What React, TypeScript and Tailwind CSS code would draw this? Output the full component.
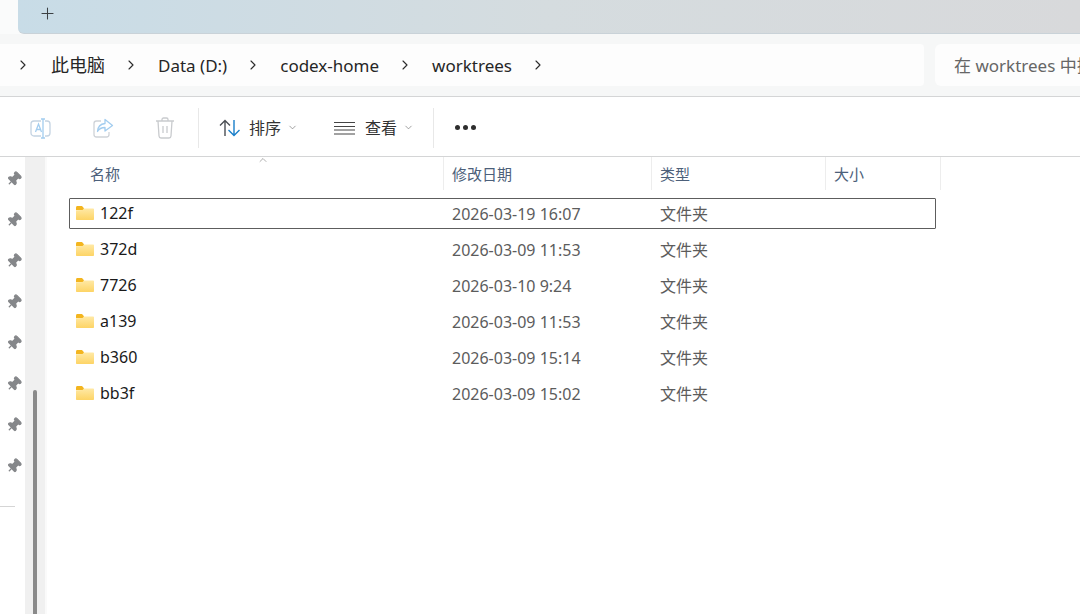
import { ChevronRight, ChevronDown, ChevronUp, Plus, Pin } from "lucide-react";

const font = { fontFamily: '"Noto Sans", "Noto Sans CJK SC", sans-serif' };

const crumbs = ["此电脑", "Data (D:)", "codex-home", "worktrees"];

const rows = [
  { name: "122f", date: "2026-03-19 16:07", selected: true },
  { name: "372d", date: "2026-03-09 11:53" },
  { name: "7726", date: "2026-03-10 9:24" },
  { name: "a139", date: "2026-03-09 11:53" },
  { name: "b360", date: "2026-03-09 15:14" },
  { name: "bb3f", date: "2026-03-09 15:02" },
];

function FolderIcon() {
  return (
    <svg width="20" height="16" viewBox="0 0 20 16" className="shrink-0 mb-[2px]">
      <defs>
        <linearGradient id="fold" x1="0" y1="0" x2="0" y2="1">
          <stop offset="0" stopColor="#ffe9a6" />
          <stop offset="1" stopColor="#fdd465" />
        </linearGradient>
      </defs>
      <path d="M1 2.500C1 1.700 1.600 1 2.400 1H7l2 2.200V5H1z" fill="#f3b51f" />
      <path d="M1 5.200 7.500 5 9 3.400h9.200c.5 0 .8.400.8.900V14c0 .6-.4 1-1 1H2c-.6 0-1-.4-1-1z" fill="url(#fold)" />
    </svg>
  );
}

function RenameIcon() {
  return (
    <svg width="24" height="24" viewBox="0 0 24 24" fill="none">
      <rect x="2" y="5" width="19" height="15" rx="3" stroke="#c4d3e2" strokeWidth="1.3" />
      <rect x="12" y="3" width="4" height="19" fill="#fff" />
      <path d="M14 3v19M12 3h4M12 22h4" stroke="#a3cdef" strokeWidth="1.3" />
      <path d="M6.500 16 9.500 8l3 8M7.500 13.500h4" stroke="#a3cdef" strokeWidth="1.3" />
    </svg>
  );
}

function ShareIcon() {
  return (
    <svg width="22" height="22" viewBox="0 0 22 22" fill="none">
      <path d="M9 4H4.500A2.500 2.500 0 0 0 2 6.500v11A2.500 2.500 0 0 0 4.500 20h10a2.500 2.500 0 0 0 2.500-2.500V15" stroke="#cfd3d8" strokeWidth="1.3" />
      <path d="M13 2.500 20.500 8.500 13 14v-3.500c-3.500 0-6 1.300-7.500 4 .3-4.500 3-7.500 7.500-8z" stroke="#a3cdef" strokeWidth="1.3" strokeLinejoin="round" />
    </svg>
  );
}

function TrashIcon() {
  return (
    <svg width="20" height="22" viewBox="0 0 20 22" fill="none" stroke="#c9cbce" strokeWidth="1.3">
      <path d="M1 4h18M7 4V2.500C7 1.700 7.700 1 8.500 1h3c.8 0 1.500.7 1.500 1.500V4" />
      <path d="M3 4l1 15c.1 1.200 1 2 2 2h8c1 0 1.900-.8 2-2l1-15" />
      <path d="M8 9v7M12 9v7" />
    </svg>
  );
}

function SortIcon() {
  return (
    <svg width="22" height="18" viewBox="0 0 22 18" fill="none" strokeWidth="1.4">
      <path d="M6 17V1.500M1 6.500l5-5 5 5" stroke="#4b4f54" />
      <path d="M15 1v15.500M9.500 11l5.500 5.500 5.500-5.500" stroke="#1a7fc9" />
    </svg>
  );
}

function PinIcon() {
  return <Pin size={16} strokeWidth={2} className="rotate-45 text-[#85878a] fill-[#85878a]" />;
}

export default function App() {
  return (
    <div style={font} className="w-[1080px] h-[614px] overflow-hidden bg-white flex flex-col text-[#1c1c1c]">
      {/* tabs */}
      <div className="h-[34px] pl-[18px] bg-[#fafbfb] shrink-0">
        <div className="h-full rounded-bl-md border-b border-[#c9d2d8] bg-gradient-to-r from-[#c8dce7] via-[#d5dcdf] to-[#d8d9db] flex items-center pl-[20px] pb-[6px]">
          <Plus size={19} strokeWidth={1.3} className="text-[#3c4043]" />
        </div>
      </div>

      {/* address bar */}
      <div className="h-[63px] shrink-0 bg-[#f6f7f7] border-b border-[#d4d5d6] pt-[10px] flex gap-[11px]">
        <div className="w-[924px] h-[42px] bg-[#fdfdfd] rounded-r flex items-center pl-[15px] text-[17px] leading-none">
          <ChevronRight size={16} strokeWidth={1.7} className="mr-[20px] text-[#2b2b2b]" />
          {crumbs.map((c, i) => (
            <div key={c} className="flex items-center">
              <span className={i === 0 ? "text-[18px] text-[#262626]" : "text-[#262626]"}>{c}</span>
              <ChevronRight size={16} strokeWidth={1.7} className="ml-[18px] mr-[19px] text-[#2b2b2b]" />
            </div>
          ))}
        </div>
        <div className="flex-1 h-[42px] bg-[#fdfdfd] rounded-l-md flex items-center pl-[19px] pt-[1px] text-[17px] text-[#666] whitespace-nowrap overflow-hidden">
          在 worktrees 中搜索
        </div>
      </div>

      {/* command bar */}
      <div className="h-[60px] shrink-0 bg-white border-b border-[#d4d5d6] flex items-center pt-[2px] text-[#333]">
        <div className="w-[198px] flex items-center pl-[29px]">
          <RenameIcon />
          <div className="ml-[39px]">
            <ShareIcon />
          </div>
          <div className="ml-[41px]">
            <TrashIcon />
          </div>
        </div>
        <div className="w-px h-[40px] bg-[#e8e8e8]" />
        <div className="flex items-center pl-[20px]">
          <SortIcon />
          <span className="ml-[8px] text-[16px]">排序</span>
          <ChevronDown size={11} strokeWidth={1.5} className="ml-[6px] text-[#777]" />
        </div>
        <div className="flex items-center pl-[36px]">
          <svg width="21" height="14" viewBox="0 0 21 14" stroke="#444" strokeWidth="1">
            <path d="M0 1.500h21M0 5.500h21M0 9h21M0 13h21" />
          </svg>
          <span className="ml-[10px] text-[16px]">查看</span>
          <ChevronDown size={11} strokeWidth={1.5} className="ml-[6px] text-[#777]" />
        </div>
        <div className="w-px h-[40px] bg-[#e8e8e8] ml-[19px]" />
        <div className="flex gap-[3px] ml-[21px]">
          <span className="w-[5px] h-[5px] rounded-full bg-[#2e2e2e]" />
          <span className="w-[5px] h-[5px] rounded-full bg-[#2e2e2e]" />
          <span className="w-[5px] h-[5px] rounded-full bg-[#2e2e2e]" />
        </div>
      </div>

      {/* body */}
      <div className="flex-1 flex min-h-0">
        <div className="w-[25px] shrink-0 relative">
          <div className="flex flex-col gap-[25px] pt-[14px] items-center pr-[1px] pl-[4px]">
            {Array.from({ length: 8 }).map((_, i) => (
              <PinIcon key={i} />
            ))}
          </div>
          <div className="absolute left-0 top-[349px] w-[15px] h-px bg-[#d5d5d5]" />
        </div>
        <div className="w-[22px] shrink-0 bg-[#f0f0f0] relative border-r-2 border-[#fafafa]">
          <div className="absolute left-[8px] top-[233px] bottom-0 w-[4px] rounded-t bg-[#8a8a8a]" />
        </div>

        <div className="flex-1 pl-[22px] min-w-0">
          <div className="h-[33px] flex text-[15px] text-[#4c607a] relative">
            <ChevronUp size={12} strokeWidth={1.2} className="absolute left-[188px] -top-[3px] text-[#777]" />
            <div className="w-[374px] pl-[21px] pt-[2px] flex items-center">名称</div>
            <div className="w-[208px] pl-[8px] pt-[2px] flex items-center border-l border-[#ededed]">修改日期</div>
            <div className="w-[174px] pl-[8px] pt-[2px] flex items-center border-l border-[#ededed]">类型</div>
            <div className="w-[116px] pl-[8px] pt-[2px] flex items-center border-x border-[#ededed]">大小</div>
          </div>
          <div className="pt-[8px] flex flex-col gap-[5px] w-[867px]">
            {rows.map((r) => (
              <div
                key={r.name}
                className={`h-[31px] flex items-center border rounded-[1px] ${r.selected ? "border-[#5d5d5d]" : "border-transparent"}`}
              >
                <div className="w-[374px] pl-[5px] flex items-center gap-[5px] text-[16px] text-[#1a1a1a]">
                  <FolderIcon />
                  <span className="mb-[2px]">{r.name}</span>
                </div>
                <div className="w-[208px] pl-[8px] text-[16px] text-[#5c5c5c]">{r.date}</div>
                <div className="pl-[8px] text-[16px] text-[#5c5c5c]">文件夹</div>
              </div>
            ))}
          </div>
        </div>
      </div>
    </div>
  );
}
